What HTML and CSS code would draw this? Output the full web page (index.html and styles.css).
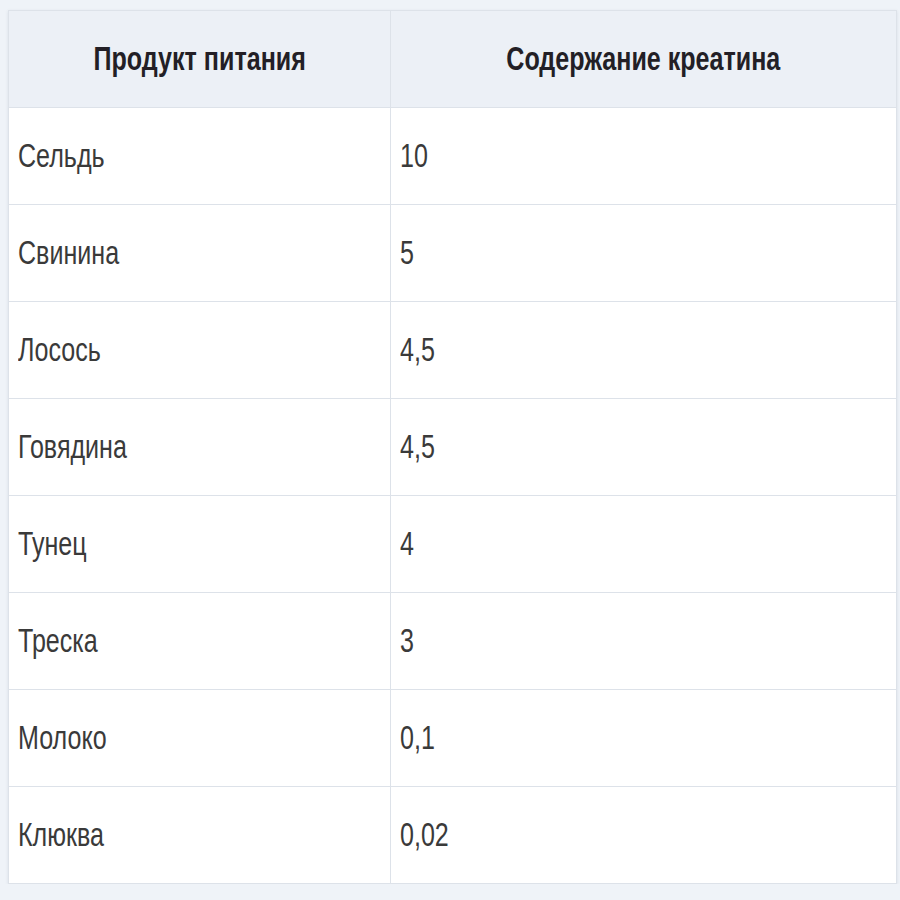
FILE: index.html
```html
<!DOCTYPE html>
<html lang="ru">
<head>
<meta charset="utf-8">
<title>Содержание креатина</title>
<link rel="stylesheet" href="styles.css">
</head>
<body>
<table class="tbl">
  <thead>
    <tr>
      <th class="col-a"><span class="txt txt-c">Продукт питания</span></th>
      <th class="col-b"><span class="txt txt-c">Содержание креатина</span></th>
    </tr>
  </thead>
  <tbody>
    <tr><td><span class="txt">Сельдь</span></td><td><span class="txt">10</span></td></tr>
    <tr><td><span class="txt">Свинина</span></td><td><span class="txt">5</span></td></tr>
    <tr><td><span class="txt">Лосось</span></td><td><span class="txt">4,5</span></td></tr>
    <tr><td><span class="txt">Говядина</span></td><td><span class="txt">4,5</span></td></tr>
    <tr><td><span class="txt">Тунец</span></td><td><span class="txt">4</span></td></tr>
    <tr><td><span class="txt">Треска</span></td><td><span class="txt">3</span></td></tr>
    <tr><td><span class="txt">Молоко</span></td><td><span class="txt">0,1</span></td></tr>
    <tr><td><span class="txt">Клюква</span></td><td><span class="txt">0,02</span></td></tr>
  </tbody>
</table>
</body>
</html>
```
FILE: styles.css
```css
html, body {
  margin: 0;
  padding: 0;
  background: #eff3f8;
}
body {
  padding: 10px 0 0 8px;
  font-family: "Liberation Sans", Arial, sans-serif;
  color: #333;
}
.tbl {
  width: 888px;
  border-collapse: collapse;
  background: #fff;
  box-shadow: 0 1px 3px rgba(60, 80, 110, 0.12);
  table-layout: fixed;
}
.tbl th, .tbl td {
  box-sizing: border-box;
  border: 1px solid #dde2e9;
  height: 97px;
  padding: 0 9px;
  vertical-align: middle;
  white-space: nowrap;
  overflow: visible;
}
.tbl th {
  background: #ecf0f6;
  text-align: center;
  font-weight: bold;
  font-size: 33px;
  color: #231f26;
}
.tbl td {
  text-align: left;
  font-size: 33px;
  color: #3a3a3a;
}
.col-a { width: 382px; }
.col-b { width: 506px; }
.txt {
  display: inline-block;
  transform: scaleX(0.76);
  transform-origin: left center;
}
.txt-c {
  transform-origin: center center;
}
```
